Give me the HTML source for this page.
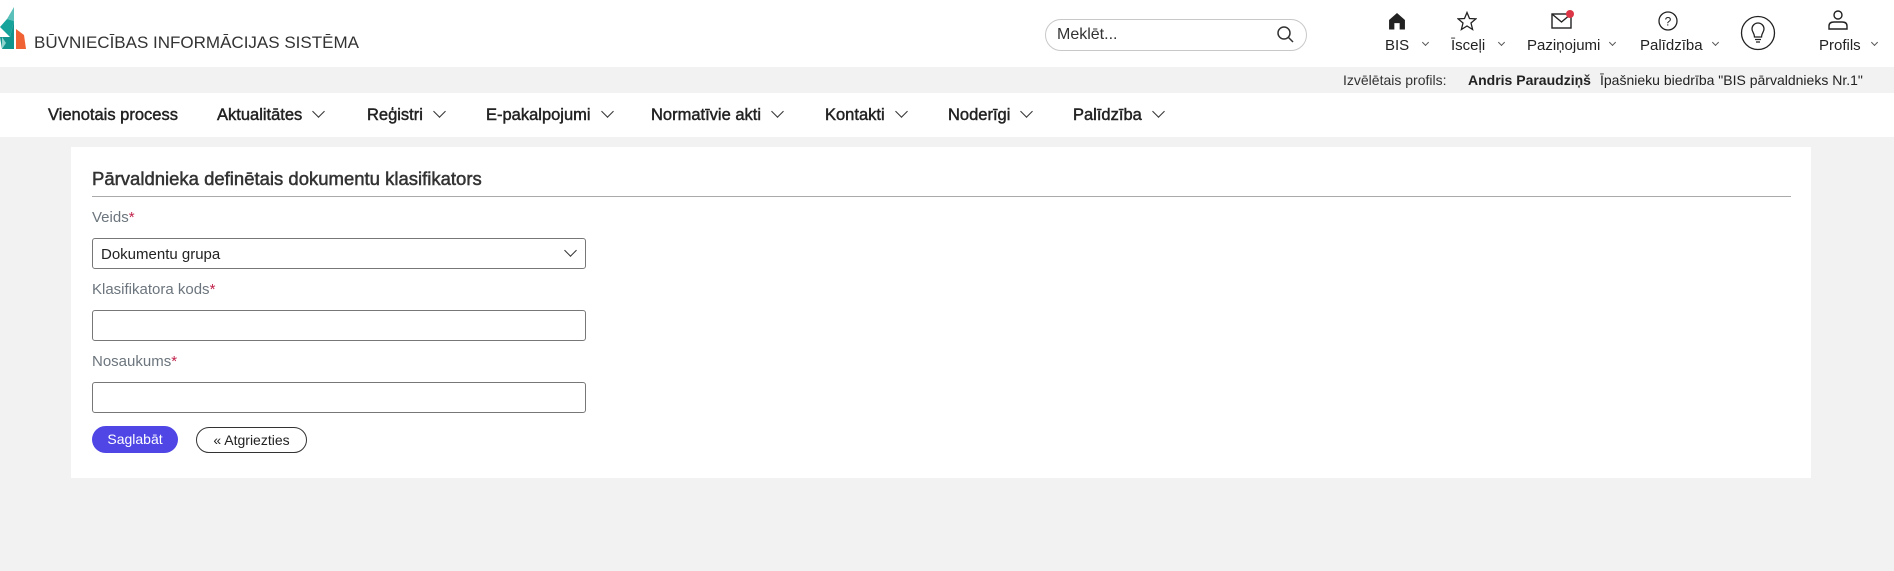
<!DOCTYPE html>
<html><head><meta charset="utf-8"><style>
*{margin:0;padding:0;box-sizing:border-box}
body{width:1894px;height:571px;background:#f2f2f2;font-family:"Liberation Sans",sans-serif;color:#222;position:relative;overflow:hidden}
.a{position:absolute;white-space:nowrap}
.hdr{position:absolute;left:0;top:0;width:1894px;height:67px;background:#fff}
.bar{position:absolute;left:0;top:67px;width:1894px;height:26px;background:#f2f2f2;font-size:14px}
.nav{position:absolute;left:0;top:93px;width:1894px;height:44px;background:#fff;font-size:16.5px;color:#222;-webkit-text-stroke:0.45px #222}
.nav .a{top:13px}
.chev{display:inline-block;width:9px;height:9px;border-right:1.5px solid #333;border-bottom:1.5px solid #333;transform:rotate(45deg);margin-left:12px;position:relative;top:-4px;-webkit-text-stroke:0}
.ic{font-size:15px;color:#222}
.sc{display:inline-block;width:5px;height:5px;border-right:1px solid #555;border-bottom:1px solid #555;transform:rotate(45deg)}
.card{position:absolute;left:71px;top:147px;width:1740px;height:331px;background:#fff}
.lbl{font-size:15px;color:#6c757d}
.lbl b{color:#c0224a;font-weight:normal}
.inp{position:absolute;left:92px;width:494px;height:31px;border:1px solid #777;border-radius:3px;background:#fff}
</style></head><body>
<div class="hdr">
<svg class="a" style="left:0;top:7px" width="32" height="44" viewBox="0 0 32 44">
<polygon points="7,12 14,0 14,14" fill="#5bbfba"/>
<polygon points="0,20 7,12 14,14 10,30" fill="#15a39c"/>
<polygon points="0,30 10,30 14,14 14,42 2,42" fill="#12948e"/>
<polygon points="2,30 6,36 2,42" fill="#8fd3cf"/>
<polygon points="16,22 24,28 26,42 16,42" fill="#f06233"/>
</svg>
<div class="a" style="left:34px;top:33px;font-size:17px;color:#333">BŪVNIECĪBAS INFORMĀCIJAS SISTĒMA</div>
<div class="a" style="left:1045px;top:19px;width:262px;height:32px;border:1px solid #c8c8c8;border-radius:16px"></div>
<div class="a" style="left:1057px;top:26px;font-size:16px;color:#333">Meklēt...</div>
<svg class="a" style="left:1276px;top:25px" width="20" height="20" viewBox="0 0 20 20"><circle cx="8" cy="8" r="6" fill="none" stroke="#333" stroke-width="1.5"/><line x1="12.5" y1="12.5" x2="17" y2="17" stroke="#333" stroke-width="1.5"/></svg>
<svg class="a" style="left:1388px;top:12px" width="18" height="18" viewBox="0 0 17 16"><path d="M1 7 L8.5 0.5 L16 7 V16 H11 V10 H6 V16 H1Z" fill="#222"/></svg>
<svg class="a" style="left:1457px;top:11px" width="20" height="20" viewBox="0 0 20 20"><polygon points="10,1.5 12.5,7.5 19,7.8 14,12 15.6,18.5 10,15 4.4,18.5 6,12 1,7.8 7.5,7.5" fill="none" stroke="#222" stroke-width="1.3"/></svg>
<svg class="a" style="left:1550px;top:9px" width="26" height="22" viewBox="0 0 26 22"><rect x="2" y="5" width="19" height="14" fill="none" stroke="#222" stroke-width="1.4"/><path d="M2 5 L11.5 13 L21 5" fill="none" stroke="#222" stroke-width="1.4"/><circle cx="20" cy="5" r="4" fill="#dc3545"/></svg>
<svg class="a" style="left:1658px;top:11px" width="20" height="20" viewBox="0 0 20 20"><circle cx="10" cy="10" r="9" fill="none" stroke="#222" stroke-width="1.3"/><text x="10" y="14.5" font-size="12" text-anchor="middle" font-family="Liberation Sans" fill="#222">?</text></svg>
<svg class="a" style="left:1740px;top:15px" width="36" height="36" viewBox="0 0 36 36"><circle cx="18" cy="18" r="16.5" fill="none" stroke="#222" stroke-width="1.3"/><path d="M14.5 22 C14.5 18 12 17 12 14 A6 6 0 0 1 24 14 C24 17 21.5 18 21.5 22 Z M15 24.5 H21 M16 27 H20" fill="none" stroke="#222" stroke-width="1.3"/></svg>
<svg class="a" style="left:1827px;top:10px" width="22" height="20" viewBox="0 0 22 20"><circle cx="11" cy="5" r="4" fill="none" stroke="#222" stroke-width="1.4"/><path d="M2 19 V16 Q2 12 7 12 H15 Q20 12 20 16 V19 Z" fill="none" stroke="#222" stroke-width="1.4"/></svg>
<div class="a ic" style="left:1385px;top:37px">BIS</div><div class="a sc" style="left:1423px;top:40px"></div>
<div class="a ic" style="left:1451px;top:37px">Īsceļi</div><div class="a sc" style="left:1499px;top:40px"></div>
<div class="a ic" style="left:1527px;top:37px">Paziņojumi</div><div class="a sc" style="left:1610px;top:40px"></div>
<div class="a ic" style="left:1640px;top:37px">Palīdzība</div><div class="a sc" style="left:1713px;top:40px"></div>
<div class="a ic" style="left:1819px;top:37px">Profils</div><div class="a sc" style="left:1872px;top:40px"></div>
</div>
<div class="bar">
<div class="a" style="left:1343px;top:5px;color:#333">Izvēlētais profils:</div>
<div class="a" style="left:1468px;top:5px;font-weight:bold">Andris Paraudziņš</div>
<div class="a" style="left:1600px;top:5px;color:#222">Īpašnieku biedrība "BIS pārvaldnieks Nr.1"</div>
</div>
<div class="nav">
<div class="a" style="left:48px">Vienotais process</div>
<div class="a" style="left:217px">Aktualitātes<span class="chev"></span></div>
<div class="a" style="left:367px">Reģistri<span class="chev"></span></div>
<div class="a" style="left:486px">E-pakalpojumi<span class="chev"></span></div>
<div class="a" style="left:651px">Normatīvie akti<span class="chev"></span></div>
<div class="a" style="left:825px">Kontakti<span class="chev"></span></div>
<div class="a" style="left:948px">Noderīgi<span class="chev"></span></div>
<div class="a" style="left:1073px">Palīdzība<span class="chev"></span></div>
</div>
<div class="card"></div>
<div class="a" style="left:92px;top:168px;font-size:18.5px;color:#333;-webkit-text-stroke:0.5px #333">Pārvaldnieka definētais dokumentu klasifikators</div>
<div class="a" style="left:92px;top:196px;width:1699px;height:1px;background:#aaa"></div>
<div class="a lbl" style="left:92px;top:209px">Veids<b>*</b></div>
<div class="inp" style="top:238px"></div>
<div class="a" style="left:101px;top:246px;font-size:15px;color:#222">Dokumentu grupa</div>
<div class="a" style="left:566px;top:246px;width:9px;height:9px;border-right:1.5px solid #333;border-bottom:1.5px solid #333;transform:rotate(45deg)"></div>
<div class="a lbl" style="left:92px;top:281px">Klasifikatora kods<b>*</b></div>
<div class="inp" style="top:310px"></div>
<div class="a lbl" style="left:92px;top:353px">Nosaukums<b>*</b></div>
<div class="inp" style="top:382px"></div>
<div class="a" style="left:92px;top:426px;width:86px;height:27px;border-radius:14px;background:#4f46e5;color:#fff;font-size:14px;text-align:center;line-height:27px">Saglabāt</div>
<div class="a" style="left:196px;top:427px;width:111px;height:26px;border-radius:13px;border:1px solid #333;background:#fff;color:#222;font-size:14px;text-align:center;line-height:24px">« Atgriezties</div>
</body></html>
